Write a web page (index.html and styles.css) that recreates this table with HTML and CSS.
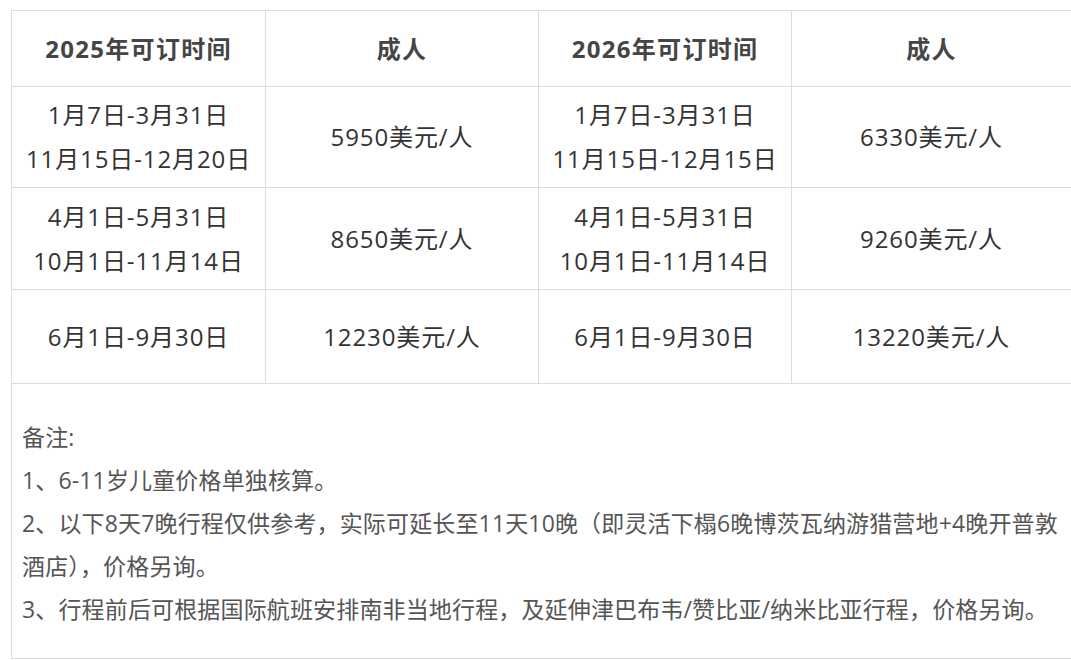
FILE: index.html
```html
<!DOCTYPE html>
<html lang="zh-CN">
<head>
<meta charset="utf-8">
<title>价格表</title>
<link rel="stylesheet" href="styles.css">
</head>
<body>
<table class="price-table">
  <colgroup>
    <col class="c1"><col class="c2"><col class="c3"><col class="c4">
  </colgroup>
  <thead>
    <tr class="head-row">
      <th>2025年可订时间</th>
      <th>成人</th>
      <th>2026年可订时间</th>
      <th>成人</th>
    </tr>
  </thead>
  <tbody>
    <tr class="row-a">
      <td>1月7日-3月31日<br>11月15日-12月20日</td>
      <td>5950美元/人</td>
      <td>1月7日-3月31日<br>11月15日-12月15日</td>
      <td>6330美元/人</td>
    </tr>
    <tr class="row-b">
      <td>4月1日-5月31日<br>10月1日-11月14日</td>
      <td>8650美元/人</td>
      <td>4月1日-5月31日<br>10月1日-11月14日</td>
      <td>9260美元/人</td>
    </tr>
    <tr class="row-c">
      <td>6月1日-9月30日</td>
      <td>12230美元/人</td>
      <td>6月1日-9月30日</td>
      <td>13220美元/人</td>
    </tr>
    <tr class="notes-row">
      <td colspan="4" class="notes">
        <p>备注:</p>
        <p>1、6-11岁儿童价格单独核算。</p>
        <p>2、以下8天7晚行程仅供参考，实际可延长至11天10晚（即灵活下榻6晚博茨瓦纳游猎营地+4晚开普敦酒店），价格另询。</p>
        <p>3、行程前后可根据国际航班安排南非当地行程，及延伸津巴布韦/赞比亚/纳米比亚行程，价格另询。</p>
      </td>
    </tr>
  </tbody>
</table>
</body>
</html>
```

FILE: styles.css
```css
html, body {
  margin: 0;
  padding: 0;
  background: #ffffff;
}

body {
  padding: 10px 0 0 11px;
  font-family: "Open Sans", "Noto Sans CJK SC", sans-serif;
}

.price-table {
  width: 1060px;
  border-collapse: collapse;
  table-layout: fixed;
  font-size: 24px;
  color: #333333;
}

.c1 { width: 254px; }
.c2 { width: 273px; }
.c3 { width: 253px; }
.c4 { width: 280px; }

.price-table th,
.price-table td {
  border: 1px solid #dddddd;
  text-align: center;
  vertical-align: middle;
  padding: 0 2px;
  line-height: 44px;
  letter-spacing: 0.9px;
}

.price-table th {
  font-weight: 700;
  color: #454545;
  height: 75px;
  letter-spacing: 1.3px;
}

.row-a td { height: 100px; }
.row-b td { height: 101px; }
.row-c td { height: 93px; }

.price-table td.notes {
  text-align: left;
  vertical-align: top;
  padding: 32px 10px 27px 10px;
  color: #555555;
  font-size: 23px;
  line-height: 43px;
  letter-spacing: 0.15px;
  height: 215px;
}

.notes p {
  margin: 0;
}
```
